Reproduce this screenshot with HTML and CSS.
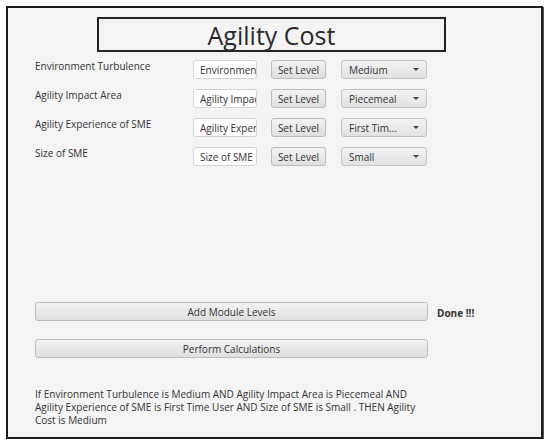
FILE: index.html
```html
<!DOCTYPE html>
<html>
<head>
<meta charset="utf-8">
<link rel="stylesheet" href="styles.css">
</head>
<body>
<div class="frame">
  <div class="title">Agility Cost</div>
  <div class="rows">
    <div class="row">
      <span class="label">Environment Turbulence</span>
      <input class="field" value="Environment Turbulence" readonly>
      <button class="btn">Set Level</button>
      <div class="combo"><span>Medium</span><i class="arrow"></i></div>
    </div>
    <div class="row">
      <span class="label">Agility Impact Area</span>
      <input class="field" value="Agility Impact Area" readonly>
      <button class="btn">Set Level</button>
      <div class="combo"><span>Piecemeal</span><i class="arrow"></i></div>
    </div>
    <div class="row">
      <span class="label">Agility Experience of SME</span>
      <input class="field" value="Agility Experience of SME" readonly>
      <button class="btn">Set Level</button>
      <div class="combo"><span>First Tim...</span><i class="arrow"></i></div>
    </div>
    <div class="row">
      <span class="label">Size of SME</span>
      <input class="field" value="Size of SME" readonly>
      <button class="btn">Set Level</button>
      <div class="combo"><span>Small</span><i class="arrow"></i></div>
    </div>
  </div>
  <div class="actions">
    <div class="action-row">
      <button class="btn wide">Add Module Levels</button>
      <span class="done">Done !!!</span>
    </div>
    <div class="action-row">
      <button class="btn wide">Perform Calculations</button>
    </div>
  </div>
  <p class="result">If Environment Turbulence is Medium AND Agility Impact Area is Piecemeal AND Agility Experience of SME is First Time User AND Size of SME is Small . THEN Agility Cost is Medium</p>
</div>
</body>
</html>
```

FILE: styles.css
```css
html, body {
  margin: 0;
  padding: 0;
  background: #ffffff;
}
body {
  font-family: "Open Sans", "Noto Sans", sans-serif;
  color: #333;
}
.frame {
  box-sizing: border-box;
  margin: 6px 0 0 6px;
  width: 537px;
  height: 433px;
  border: 2px solid #1e1e1e;
  box-shadow: 1px 1px 0 #555;
  background: #f4f4f4;
  padding: 9px 0 0 0;
  display: flex;
  flex-direction: column;
}
.title {
  box-sizing: border-box;
  margin-left: 89px;
  width: 349px;
  height: 35px;
  border: 2px solid #222;
  display: flex;
  align-items: center;
  justify-content: center;
  font-size: 25px;
  color: #2a2a2a;
}
.rows {
  margin-top: 8px;
  display: flex;
  flex-direction: column;
  gap: 10px;
}
.row {
  display: grid;
  grid-template-columns: 144px 64px 55px 87px;
  column-gap: 14px;
  margin-left: 27px;
  height: 19px;
  align-items: start;
}
.label {
  font-size: 10px;
  line-height: 12px;
  margin-top: 0;
  color: #333;
}
.field {
  box-sizing: border-box;
  width: 64px;
  height: 19px;
  border: 1px solid #d4d4d4;
  border-radius: 3px;
  background: #fff;
  font-family: inherit;
  font-size: 10px;
  color: #333;
  padding: 0 0 0 6px;
  outline: none;
}
.btn {
  box-sizing: border-box;
  height: 19px;
  border: 1px solid #bdbdbd;
  border-radius: 3px;
  background: linear-gradient(#f3f3f3, #dedede);
  font-family: inherit;
  font-size: 10px;
  color: #333;
  padding: 0;
}
.combo {
  box-sizing: border-box;
  height: 19px;
  margin-left: 1px;
  border: 1px solid #c4c4c4;
  border-radius: 3px;
  background: linear-gradient(#f3f3f3, #e1e1e1);
  font-size: 10px;
  display: flex;
  align-items: center;
  justify-content: space-between;
  padding: 0 7px 0 7px;
  color: #333;
}
.arrow {
  width: 0;
  height: 0;
  border-left: 3px solid transparent;
  border-right: 3px solid transparent;
  border-top: 3px solid #444;
}
.actions {
  margin-top: 136px;
  display: flex;
  flex-direction: column;
  gap: 18px;
}
.action-row {
  display: flex;
  align-items: center;
  margin-left: 27px;
  gap: 9px;
}
.wide {
  width: 393px;
  height: 19px;
}
.done {
  font-size: 10px;
  font-weight: bold;
  color: #333;
  margin-top: 2px;
}
.result {
  margin: 30px 0 0 27px;
  width: 395px;
  font-size: 10px;
  line-height: 13px;
  color: #333;
}
```
